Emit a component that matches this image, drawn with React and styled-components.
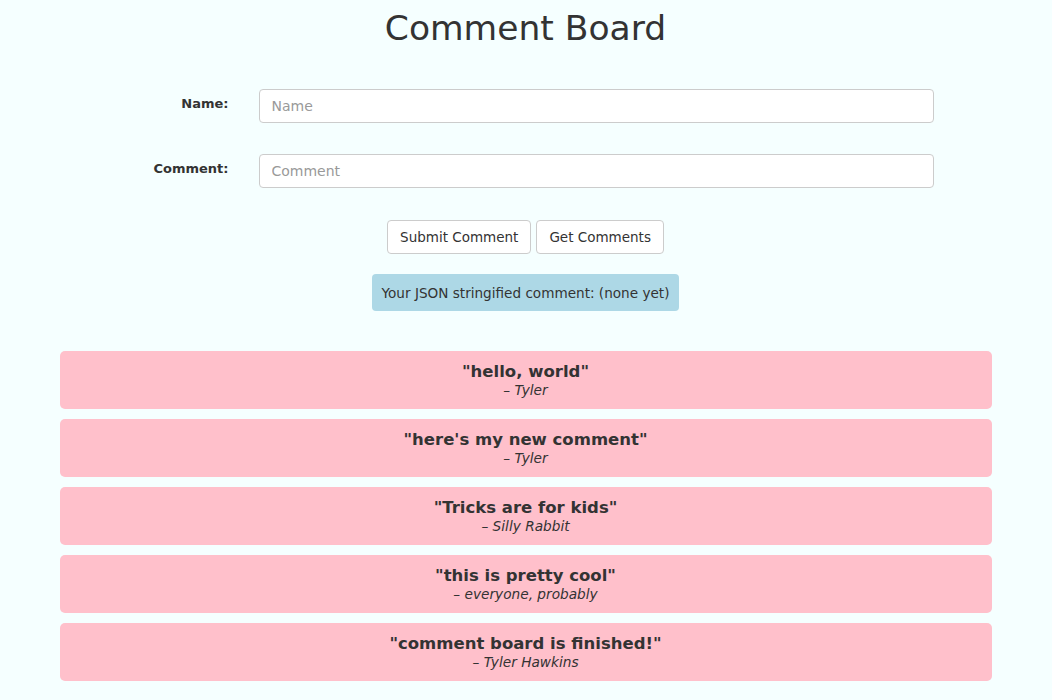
import React from "react";
import styled, { createGlobalStyle } from "styled-components";

const Global = createGlobalStyle`
  html, body { margin: 0; padding: 0; }
  body {
    background: #f5ffff;
    font-family: "DejaVu Sans", Verdana, sans-serif;
    color: #333;
    font-size: 14px;
  }
`;

const Page = styled.div`
  width: 932px;
  margin: 0 auto;
  padding: 8px 1px 0 0;
  display: flex;
  flex-direction: column;
  align-items: stretch;
`;

const Title = styled.h1`
  margin: 0;
  text-align: center;
  font-weight: 400;
  font-size: 34.5px;
  line-height: 40px;
  color: #333;
`;

const Form = styled.form`
  margin-top: 41px;
  display: flex;
  flex-direction: column;
  gap: 31px;
`;

const Row = styled.div`
  display: flex;
  align-items: flex-start;
  gap: 30px;
`;

const Label = styled.label`
  width: 169px;
  text-align: right;
  font-weight: 700;
  font-size: 13px;
  line-height: 30px;
`;

const Input = styled.input`
  width: 675px;
  height: 34px;
  box-sizing: border-box;
  border: 1px solid #ccc;
  border-radius: 4px;
  padding: 6px 12px;
  font-family: inherit;
  font-size: 14px;
  color: #555;
  background: #fff;
  &::placeholder { color: #999; }
`;

const Buttons = styled.div`
  margin-top: 32px;
  display: flex;
  justify-content: center;
  gap: 5px;
`;

const Button = styled.button`
  height: 34px;
  padding: 6px 12px;
  box-sizing: border-box;
  border: 1px solid #ccc;
  border-radius: 4px;
  background: #fff;
  color: #333;
  font-family: inherit;
  font-size: 13.5px;
`;

const AlertWrap = styled.div`
  margin-top: 20px;
  display: flex;
  justify-content: center;
`;

const Alert = styled.div`
  background: #add8e6;
  border-radius: 4px;
  padding: 0 10px;
  height: 37px;
  display: flex;
  align-items: center;
  font-size: 13.6px;
`;

const List = styled.div`
  margin-top: 40px;
  display: flex;
  flex-direction: column;
  gap: 10px;
`;

const Card = styled.div`
  background: #ffc0cb;
  border-radius: 5px;
  height: 58px;
  box-sizing: border-box;
  padding-top: 11px;
  text-align: center;
`;

const Quote = styled.div`
  font-weight: 700;
  font-size: 16.5px;
  line-height: 20px;
`;

const Author = styled.div`
  font-style: italic;
  font-size: 13.7px;
  line-height: 17px;
`;

const comments = [
  ["hello, world", "Tyler"],
  ["here's my new comment", "Tyler"],
  ["Tricks are for kids", "Silly Rabbit"],
  ["this is pretty cool", "everyone, probably"],
  ["comment board is finished!", "Tyler Hawkins"],
];

export default function App() {
  return (
    <>
      <Global />
      <Page>
        <Title>Comment Board</Title>
        <Form onSubmit={(e) => e.preventDefault()}>
          <Row>
            <Label>Name:</Label>
            <Input placeholder="Name" />
          </Row>
          <Row>
            <Label>Comment:</Label>
            <Input placeholder="Comment" />
          </Row>
        </Form>
        <Buttons>
          <Button>Submit Comment</Button>
          <Button>Get Comments</Button>
        </Buttons>
        <AlertWrap>
          <Alert>Your JSON stringified comment: (none yet)</Alert>
        </AlertWrap>
        <List>
          {comments.map(([text, who]) => (
            <Card key={text}>
              <Quote>"{text}"</Quote>
              <Author>– {who}</Author>
            </Card>
          ))}
        </List>
      </Page>
    </>
  );
}
